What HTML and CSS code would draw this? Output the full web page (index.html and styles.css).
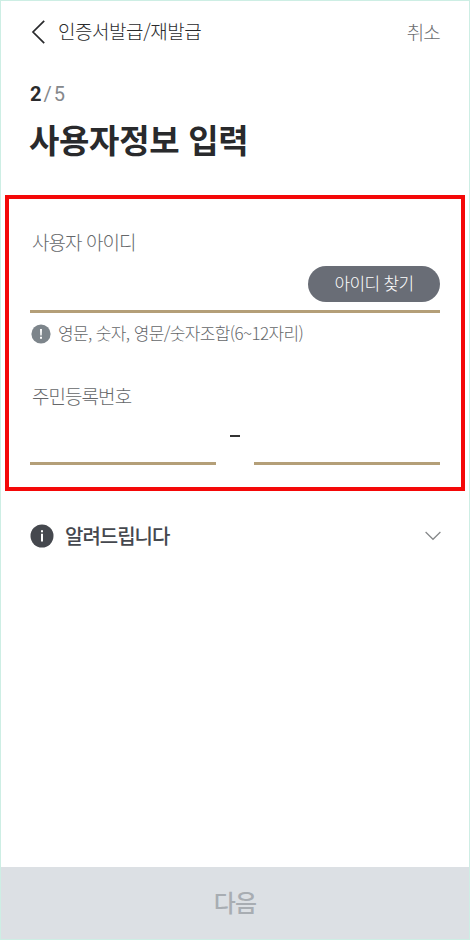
FILE: index.html
```html
<!DOCTYPE html>
<html lang="ko">
<head>
  <meta charset="UTF-8">
  <meta name="viewport" content="width=device-width, initial-scale=1.0">
  <title>인증서발급/재발급</title>
  <link rel="stylesheet" href="styles.css">
</head>
<body>
  <div class="screen">
    <header class="top-bar">
      <svg class="back" width="14" height="26" viewBox="0 0 14 26"><path d="M13.2 1.8 2 13 13.2 24.2" fill="none" stroke="#292a2c" stroke-width="1.7"/></svg>
      <span class="top-title">인증서발급/재발급</span>
      <span class="cancel">취소</span>
    </header>

    <div class="step"><b>2</b><span>/</span><span>5</span></div>
    <h1>사용자정보 입력</h1>

    <section class="form-box">
      <div class="label">사용자 아이디</div>
      <div class="id-field">
        <button class="find-id">아이디 찾기</button>
      </div>
      <div class="hint">
        <svg width="20" height="20" viewBox="0 0 20 20"><circle cx="10" cy="10" r="9.6" fill="#7d858b"/><path d="M9 5h2l-.3 6.4H9.3zM9 12.8h2v2H9z" fill="#fff"/></svg>
        <span>영문, 숫자, 영문/숫자조합(6~12자리)</span>
      </div>
      <div class="label label-number">주민등록번호</div>
      <div class="number-row">
        <div class="number-field"></div>
        <span class="dash"></span>
        <div class="number-field"></div>
      </div>
    </section>

    <div class="notice">
      <svg width="24" height="24" viewBox="0 0 24 24"><circle cx="12" cy="12" r="11.5" fill="#45484e"/><path d="M11 6.2h2v2h-2zM11 9.8h2v7.8h-2z" fill="#fff"/></svg>
      <span class="notice-title">알려드립니다</span>
      <svg class="arrow" width="16" height="10" viewBox="0 0 16 10"><path d="M.6 1 8 8.3 15.4 1" fill="none" stroke="#858789" stroke-width="1.2"/></svg>
    </div>

    <button class="next">다음</button>
  </div>
</body>
</html>
```

FILE: styles.css
```css
* {
  box-sizing: border-box;
}
body {
  margin: 0;
  font-family: "Noto Sans CJK KR", sans-serif;
  font-weight: 300;
  color: #292a2c;
  background: #fff;
}
button {
  border: none;
  padding: 0;
  font-family: inherit;
}
.screen {
  height: 940px;
  border: 1px solid #cdeee4;
  display: flex;
  flex-direction: column;
}
.top-bar {
  display: flex;
  align-items: center;
  height: 26px;
  margin: 18px 29px 0 30px;
}
.top-title {
  margin-left: 13px;
  padding-bottom: 2px;
  font-size: 19px;
  line-height: 26px;
  letter-spacing: -0.45px;
}
.cancel {
  margin-left: auto;
  font-size: 19px;
  line-height: 26px;
  letter-spacing: -0.8px;
  color: #6b6d70;
}
.step {
  display: flex;
  gap: 2px;
  margin: 36px 0 0 29px;
  font-family: Roboto, sans-serif;
  font-size: 20px;
  line-height: 26px;
  font-weight: 400;
  color: #85888c;
}
.step b {
  font-weight: 700;
  color: #292a2c;
}
h1 {
  margin: 8px 0 0 28px;
  font-size: 33px;
  line-height: 48px;
  font-weight: 700;
  letter-spacing: -0.3px;
}
.form-box {
  height: 296px;
  margin: 32px 4px 0;
  padding: 30px 21px 0;
  border: 4px solid #f40808;
}
.label {
  margin-left: 2px;
  font-size: 19px;
  line-height: 26px;
  letter-spacing: -0.95px;
  color: #65676a;
}
.id-field {
  display: flex;
  justify-content: flex-end;
  height: 58px;
  padding-top: 11px;
  border-bottom: 3px solid #b49f78;
}
.find-id {
  width: 132px;
  height: 36px;
  padding-bottom: 4px;
  border-radius: 18px;
  background: #696d76;
  color: #fff;
  font-size: 17px;
  font-weight: 300;
  letter-spacing: -0.7px;
}
.hint {
  display: flex;
  align-items: center;
  gap: 7px;
  height: 24px;
  margin: 9px 0 0 1px;
  font-size: 17px;
  line-height: 24px;
  letter-spacing: -0.62px;
  color: #65676a;
}
.hint span {
  padding-bottom: 3px;
}
.label-number {
  margin-top: 37px;
}
.number-row {
  display: flex;
  justify-content: space-between;
  height: 56px;
}
.number-field {
  width: 186px;
  border-bottom: 3px solid #b49f78;
}
.dash {
  width: 10px;
  height: 2px;
  margin-top: 26px;
  background: #333;
}
.notice {
  display: flex;
  align-items: center;
  height: 28px;
  margin: 31px 28px 0 29px;
}
.notice-title {
  margin-left: 11px;
  padding-bottom: 1px;
  font-size: 20px;
  line-height: 28px;
  letter-spacing: -1px;
  font-weight: 500;
  color: #45484e;
}
.arrow {
  margin-left: auto;
}
.next {
  height: 72px;
  margin-top: auto;
  padding-bottom: 3px;
  background: #dce0e4;
  color: #a8adb2;
  font-size: 24px;
  letter-spacing: -0.8px;
  font-weight: 500;
}
```
